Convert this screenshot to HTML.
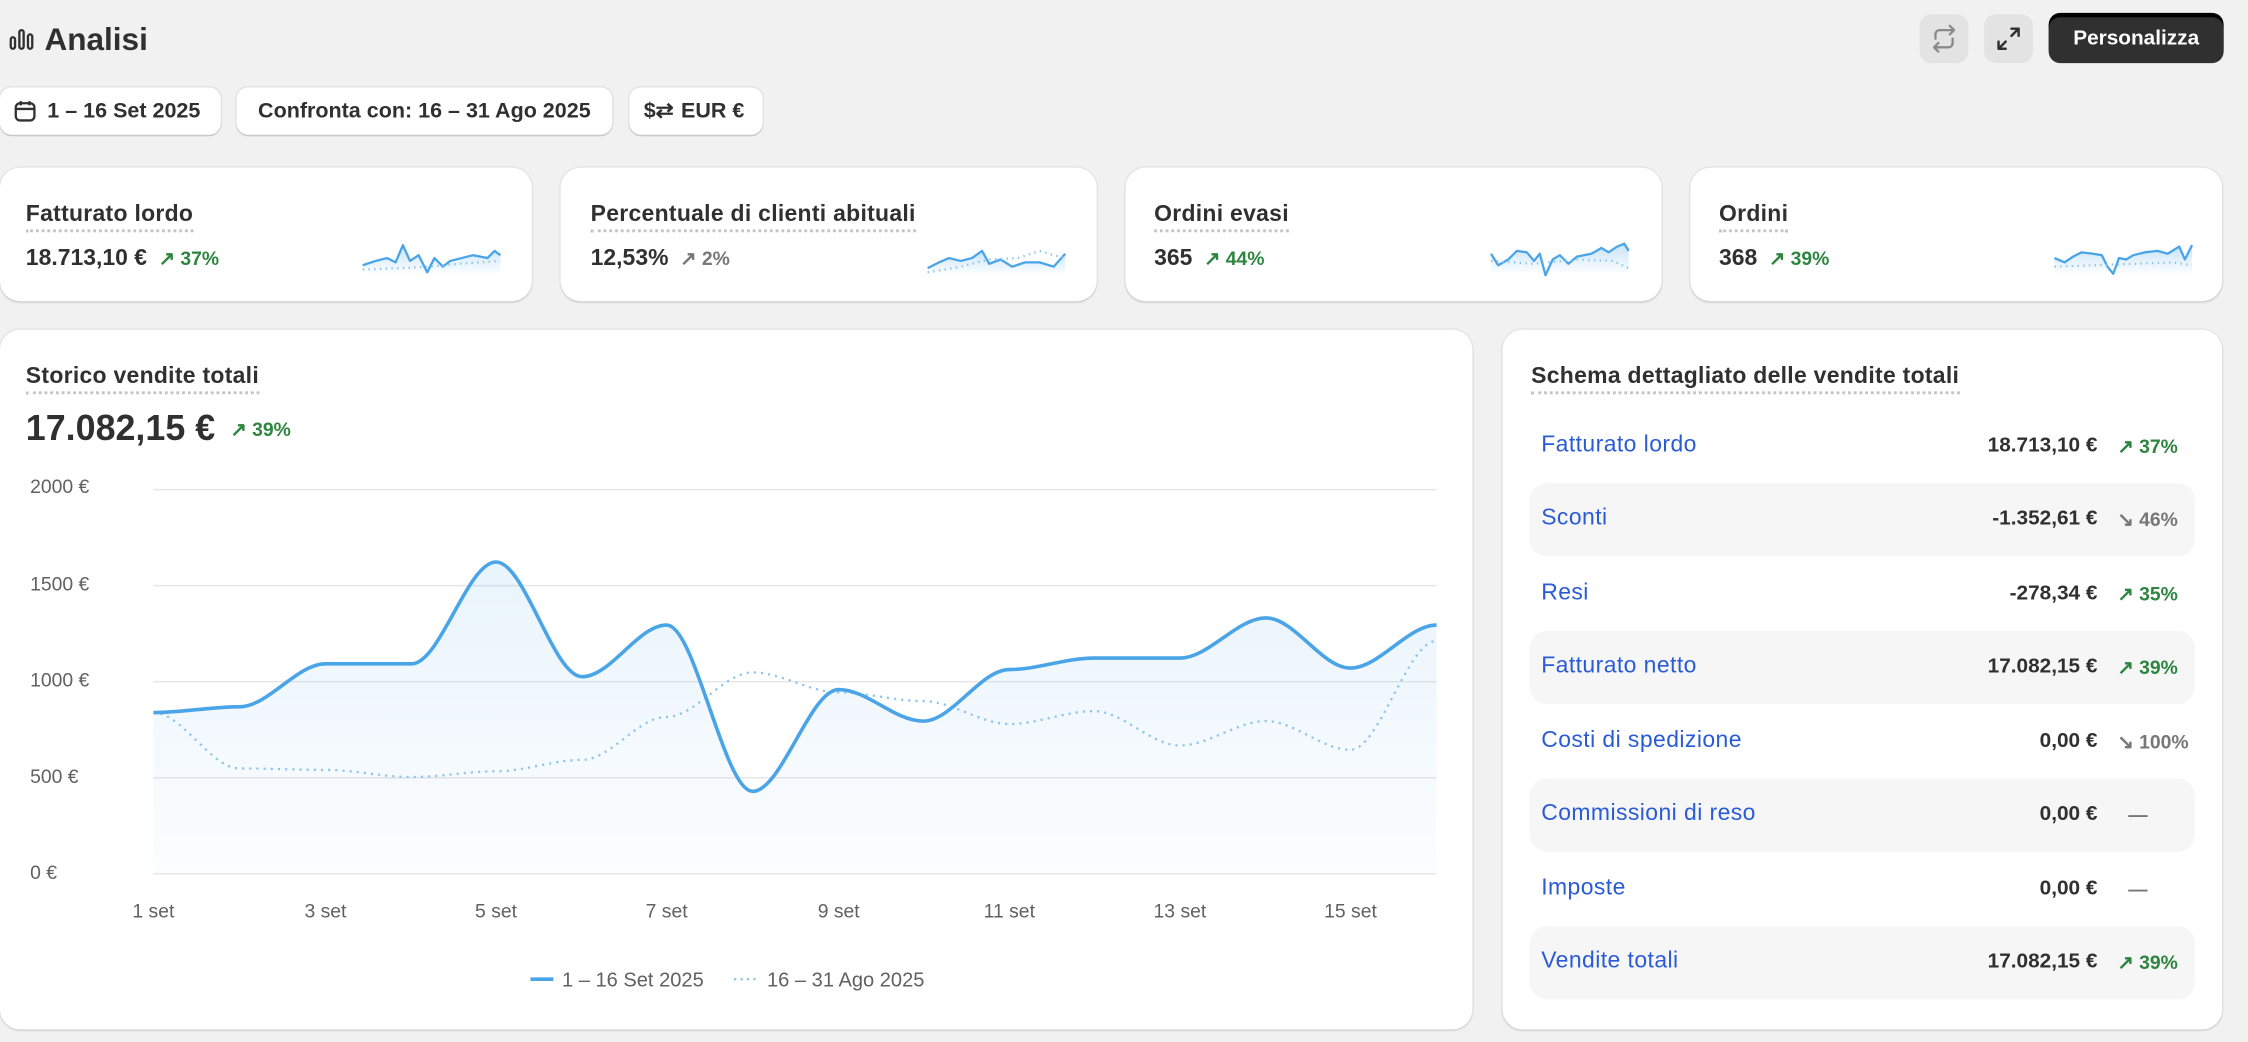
<!DOCTYPE html>
<html><head><meta charset="utf-8"><style>
html,body{margin:0;padding:0;background:#f1f1f1;width:2248px;height:1042px;overflow:hidden}
#w{position:absolute;left:0;top:0;width:1568px;height:727px;transform:scale(1.43367);transform-origin:0 0;font-family:"Liberation Sans",sans-serif;color:#303030}
.a{position:absolute}
.btn{position:absolute;background:#fff;border-radius:8px;box-shadow:0 1px 0 #c8c8c8,0 0 0 1px #e3e3e3;height:33px;line-height:33px;font-size:15px;font-weight:bold;color:#303030}
.card{position:absolute;background:#fff;border-radius:14px;box-shadow:0 1px 1px #d4d4d4,0 0 0 1px #e6e6e6}
.t{position:absolute;font-size:16px;letter-spacing:.2px;font-weight:bold;color:#303030;border-bottom:2px dotted #c4c4c4;line-height:19px;padding-bottom:1px}
.v{position:absolute;font-size:16px;font-weight:bold;color:#303030}
.g{color:#2e8540;font-size:13.5px;font-weight:bold}
.gr{color:#777;font-size:13.5px;font-weight:bold}
.row{position:absolute;left:19px;width:464px;height:51px;border-radius:12px}
.row .l{position:absolute;left:8px;top:16px;font-size:16px;letter-spacing:.3px;color:#2a5bd7}
.row .n{position:absolute;right:68px;top:17px;font-size:14.5px;font-weight:bold}
.row .c{position:absolute;left:410px;top:18px;font-size:13.5px;font-weight:bold;width:54px}
.yl{position:absolute;left:21px;font-size:13.5px;color:#616161}
.xl{position:absolute;top:628px;font-size:13.5px;color:#616161;transform:translateX(-50%)}
</style></head><body><div id="w">
<svg class="a" style="left:6px;top:18px" width="18" height="18" viewBox="0 0 18 18" fill="none" stroke="#303030" stroke-width="1.6"><rect x="1.5" y="8" width="3" height="8" rx="1.5"/><rect x="7.5" y="3" width="3" height="13" rx="1.5"/><rect x="13.5" y="6" width="3" height="10" rx="1.5"/></svg>
<div class="a" style="left:31px;top:15px;font-size:22px;font-weight:bold">Analisi</div>
<div class="a" style="left:1339px;top:10px;width:34px;height:34px;border-radius:8px;background:#e3e3e3"><svg width="34" height="34" viewBox="0 0 34 34" fill="none" stroke="#8a8a8a" stroke-width="1.6" stroke-linecap="round" stroke-linejoin="round"><path d="M11 17v-3a3 3 0 0 1 3-3h10M21 8l3 3-3 3M23 17v3a3 3 0 0 1-3 3H10M13 26l-3-3 3-3"/></svg></div>
<div class="a" style="left:1384px;top:10px;width:34px;height:34px;border-radius:8px;background:#e3e3e3"><svg width="34" height="34" viewBox="0 0 34 34" fill="none" stroke="#303030" stroke-width="1.7" stroke-linecap="round" stroke-linejoin="round"><path d="M19 10h5v5M24 10l-5 5M15 24h-5v-5M10 24l5-5"/></svg></div>
<div class="a" style="left:1429px;top:10px;width:122px;height:34px;border-radius:8px;background:#303030;box-shadow:0 2px 0 #000 inset,0 -1px 0 #000;color:#fff;font-size:14.5px;font-weight:bold;text-align:center;line-height:34px">Personalizza</div>
<div class="btn" style="left:0;top:61px;width:154px"><svg class="a" style="left:9px;top:8px" width="17" height="17" viewBox="0 0 17 17" fill="none" stroke="#303030" stroke-width="1.6"><rect x="2" y="3" width="13" height="12" rx="3"/><path d="M2 7h13M5.5 1.5v3M11.5 1.5v3"/></svg><span class="a" style="left:33px">1 – 16 Set 2025</span></div>
<div class="btn" style="left:165px;top:61px;width:262px;text-align:center">Confronta con: 16 – 31 Ago 2025</div>
<div class="btn" style="left:439px;top:61px;width:93px"><span class="a" style="left:10px;font-size:15px">$⇄</span><span class="a" style="left:36px">EUR €</span></div>

<div class="card" style="left:0;top:117px;width:371px;height:93px"></div>
<div class="card" style="left:391px;top:117px;width:374px;height:93px"></div>
<div class="card" style="left:785px;top:117px;width:374px;height:93px"></div>
<div class="card" style="left:1179px;top:117px;width:371px;height:93px"></div>
<div class="t" style="left:18px;top:140px">Fatturato lordo</div>
<div class="v" style="left:18px;top:172px">18.713,10 € <span class="g">&nbsp;↗ 37%</span></div>
<div class="t" style="left:412px;top:140px">Percentuale di clienti abituali</div>
<div class="v" style="left:412px;top:172px">12,53% <span class="gr">&nbsp;↗ 2%</span></div>
<div class="t" style="left:805px;top:140px">Ordini evasi</div>
<div class="v" style="left:805px;top:172px">365 <span class="g">&nbsp;↗ 44%</span></div>
<div class="t" style="left:1199px;top:140px">Ordini</div>
<div class="v" style="left:1199px;top:172px">368 <span class="g">&nbsp;↗ 39%</span></div>
<svg class="a" style="left:0;top:0" width="1568" height="727" fill="none">
<defs><linearGradient id="sg" x1="0" y1="0" x2="0" y2="1"><stop offset="0" stop-color="#4aa4e8" stop-opacity=".3"/><stop offset="1" stop-color="#4aa4e8" stop-opacity="0"/></linearGradient>
<linearGradient id="bg" x1="0" y1="0" x2="0" y2="1"><stop offset="0" stop-color="#4aa4e8" stop-opacity=".12"/><stop offset="1" stop-color="#4aa4e8" stop-opacity="0.02"/></linearGradient></defs>
<g stroke-width="1.6" stroke-linejoin="round">
<path d="M253,185 L262,182 270,180 276,183 281,171 286,182 292,178 298,190 303,180 309,186 314,182 322,180 330,178 340,180 345,175 349,178 L349,192 253,192Z" fill="url(#sg)"/>
<path d="M253,185 L262,182 270,180 276,183 281,171 286,182 292,178 298,190 303,180 309,186 314,182 322,180 330,178 340,180 345,175 349,178" stroke="#4aa4e8"/>
<path d="M253,188 L280,187 300,186 320,184 349,182" stroke="#8cc4ee" stroke-dasharray="1 3"/>
<path d="M647,187 L655,183 662,180 670,182 678,180 685,175 690,184 698,181 706,186 715,183 725,183 735,186 743,177 L743,192 647,192Z" fill="url(#sg)"/>
<path d="M647,187 L655,183 662,180 670,182 678,180 685,175 690,184 698,181 706,186 715,183 725,183 735,186 743,177" stroke="#4aa4e8"/>
<path d="M647,190 L670,186 690,181 710,180 725,175 735,178 743,180" stroke="#8cc4ee" stroke-dasharray="1 3"/>
<path d="M1040,177 L1045,185 1052,181 1058,175 1065,176 1070,182 1074,177 1078,192 1083,181 1088,178 1094,184 1100,179 1110,177 1117,173 1122,176 1128,172 1133,170 1136,175 L1136,192 1040,192Z" fill="url(#sg)"/>
<path d="M1040,177 L1045,185 1052,181 1058,175 1065,176 1070,182 1074,177 1078,192 1083,181 1088,178 1094,184 1100,179 1110,177 1117,173 1122,176 1128,172 1133,170 1136,175" stroke="#4aa4e8"/>
<path d="M1040,182 L1070,184 1100,181 1125,182 1136,187" stroke="#8cc4ee" stroke-dasharray="1 3"/>
<path d="M1433,180 L1440,183 1446,179 1452,176 1460,177 1466,178 1470,186 1474,191 1478,180 1483,181 1488,178 1496,176 1505,175 1512,177 1520,172 1524,181 1529,171 L1529,192 1433,192Z" fill="url(#sg)"/>
<path d="M1433,180 L1440,183 1446,179 1452,176 1460,177 1466,178 1470,186 1474,191 1478,180 1483,181 1488,178 1496,176 1505,175 1512,177 1520,172 1524,181 1529,171" stroke="#4aa4e8"/>
<path d="M1433,186 L1460,185 1490,184 1515,183 1529,185" stroke="#8cc4ee" stroke-dasharray="1 3"/>
</g></svg>

<div class="card" style="left:0;top:230px;width:1027px;height:488px"></div>
<div class="t" style="left:18px;top:253px">Storico vendite totali</div>
<div class="a" style="left:18px;top:285px;font-size:25px;font-weight:bold">17.082,15 € <span class="g" style="font-size:13.5px;vertical-align:3px">&nbsp;↗ 39%</span></div>
<div class="yl" style="top:332px">2000 €</div>
<div class="yl" style="top:400px">1500 €</div>
<div class="yl" style="top:467px">1000 €</div>
<div class="yl" style="top:534px">500 €</div>
<div class="yl" style="top:601px">0 €</div>
<div class="xl" style="left:107px">1 set</div><div class="xl" style="left:227px">3 set</div><div class="xl" style="left:346px">5 set</div><div class="xl" style="left:465px">7 set</div><div class="xl" style="left:585px">9 set</div><div class="xl" style="left:704px">11 set</div><div class="xl" style="left:823px">13 set</div><div class="xl" style="left:942px">15 set</div>
<svg class="a" style="left:0;top:0" width="1568" height="727" fill="none">
<g stroke="#e6e6e6" stroke-width="1"><path d="M107,341.5H1002M107,408.5H1002M107,475.5H1002M107,542.5H1002M107,609.5H1002"/></g>
<path d="M107,497 C127,497 147,493 167,493 C187,493 207,463 227,463 C247,463 267,463 287,463 C307,463 326,392 346,392 C366,392 386,472 406,472 C426,472 445,436 465,436 C485,436 505,552 525,552 C545,552 565,481 585,481 C605,481 624,503 644,503 C664,503 684,467 704,467 C724,467 743,459 763,459 C783,459 803,459 823,459 C843,459 863,431 883,431 C903,431 922,466 942,466 C962,466 982,436 1002,436 L1002,609 107,609Z" fill="url(#bg)"/>
<path d="M107,497 C127,497 147,536 167,536 C187,536 207,537 227,537 C247,537 267,542 287,542 C307,542 326,538 346,538 C366,538 386,530 406,530 C426,530 445,500 465,500 C485,500 505,469 525,469 C545,469 565,483 585,483 C605,483 624,489 644,489 C664,489 684,505 704,505 C724,505 743,496 763,496 C783,496 803,520 823,520 C843,520 863,503 883,503 C903,503 922,523 942,523 C962,523 982,447 1002,447" stroke="#8cc4ee" stroke-width="1.6" stroke-dasharray="1.5 3.5"/>
<path d="M107,497 C127,497 147,493 167,493 C187,493 207,463 227,463 C247,463 267,463 287,463 C307,463 326,392 346,392 C366,392 386,472 406,472 C426,472 445,436 465,436 C485,436 505,552 525,552 C545,552 565,481 585,481 C605,481 624,503 644,503 C664,503 684,467 704,467 C724,467 743,459 763,459 C783,459 803,459 823,459 C843,459 863,431 883,431 C903,431 922,466 942,466 C962,466 982,436 1002,436" stroke="#4aa4e8" stroke-width="2.5"/>
<path d="M370,683H386" stroke="#4aa4e8" stroke-width="2.5"/>
<path d="M512,683H528" stroke="#8cc4ee" stroke-width="1.6" stroke-dasharray="1.5 3"/>
</svg>
<div class="a" style="left:392px;top:675px;font-size:14px;color:#616161">1 – 16 Set 2025</div>
<div class="a" style="left:535px;top:675px;font-size:14px;color:#616161">16 – 31 Ago 2025</div>

<div class="card" style="left:1048px;top:230px;width:502px;height:488px">
<div class="t" style="left:20px;top:23px">Schema dettagliato delle vendite totali</div>
<div class="row" style="top:56px"><span class="l">Fatturato lordo</span><span class="n">18.713,10 €</span><span class="c g">↗ 37%</span></div>
<div class="row" style="top:107px;background:#f6f6f6"><span class="l">Sconti</span><span class="n">-1.352,61 €</span><span class="c gr">↘ 46%</span></div>
<div class="row" style="top:159px"><span class="l">Resi</span><span class="n">-278,34 €</span><span class="c g">↗ 35%</span></div>
<div class="row" style="top:210px;background:#f6f6f6"><span class="l">Fatturato netto</span><span class="n">17.082,15 €</span><span class="c g">↗ 39%</span></div>
<div class="row" style="top:262px"><span class="l">Costi di spedizione</span><span class="n">0,00 €</span><span class="c gr">↘ 100%</span></div>
<div class="row" style="top:313px;background:#f6f6f6"><span class="l">Commissioni di reso</span><span class="n">0,00 €</span><span class="c gr">&nbsp;&nbsp;—</span></div>
<div class="row" style="top:365px"><span class="l">Imposte</span><span class="n">0,00 €</span><span class="c gr">&nbsp;&nbsp;—</span></div>
<div class="row" style="top:416px;background:#f6f6f6"><span class="l">Vendite totali</span><span class="n">17.082,15 €</span><span class="c g">↗ 39%</span></div>
</div>
</div></body></html>
